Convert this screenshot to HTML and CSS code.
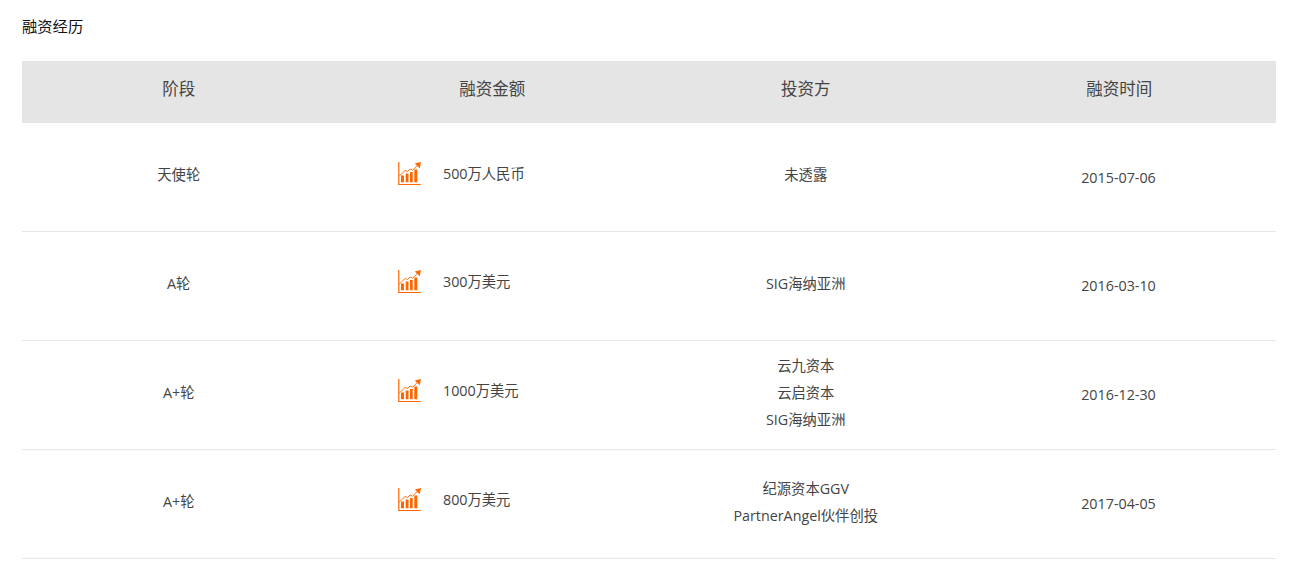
FILE: index.html
```html
<!DOCTYPE html>
<html lang="zh">
<head>
<meta charset="utf-8">
<title>融资经历</title>
<link rel="stylesheet" href="styles.css">
</head>
<body>
<svg class="defs" width="0" height="0" aria-hidden="true">
  <symbol id="chart" viewBox="0 0 24 24">
    <path d="M.8 0V22.500H22.800" fill="none" stroke="#f60" stroke-width="1.200"/>
    <path d="M1.300 14 7 8.500 9.500 9.500 12 7 14.700 8.200 20 2.800" fill="none" stroke="#f60" stroke-width=".9"/>
    <path d="M16.800 1.600 23 .1 21.700 6.200Z" fill="#f60"/>
    <path d="M3 13.500H6V20.300H3ZM7.700 11.500H10.500V20.300H7.700ZM12 10H14.700V20.300H12ZM16.300 7.500H19.300V20.300H16.300Z" fill="#f60"/>
  </symbol>
</svg>
<main class="page">
  <h2 class="title">融资经历</h2>
  <div class="head">
    <div>阶段</div><div>融资金额</div><div>投资方</div><div>融资时间</div>
  </div>
  <div class="row">
    <div class="stage">天使轮</div>
    <div class="amount"><svg class="icon"><use href="#chart"/></svg><span>500万人民币</span></div>
    <div class="investors"><p>未透露</p></div>
    <div class="date">2015-07-06</div>
  </div>
  <div class="row">
    <div class="stage">A轮</div>
    <div class="amount"><svg class="icon"><use href="#chart"/></svg><span>300万美元</span></div>
    <div class="investors"><p>SIG海纳亚洲</p></div>
    <div class="date">2016-03-10</div>
  </div>
  <div class="row">
    <div class="stage">A+轮</div>
    <div class="amount"><svg class="icon"><use href="#chart"/></svg><span>1000万美元</span></div>
    <div class="investors"><p>云九资本</p><p>云启资本</p><p>SIG海纳亚洲</p></div>
    <div class="date">2016-12-30</div>
  </div>
  <div class="row">
    <div class="stage">A+轮</div>
    <div class="amount"><svg class="icon"><use href="#chart"/></svg><span>800万美元</span></div>
    <div class="investors"><p>纪源资本GGV</p><p>PartnerAngel伙伴创投</p></div>
    <div class="date">2017-04-05</div>
  </div>
</main>
</body>
</html>
```
FILE: styles.css
```css
* { box-sizing: border-box; }
html, body { margin: 0; background: #fff; }
body {
  font-family: "Open Sans", "Noto Sans CJK SC", sans-serif;
  font-size: 14.3px;
  color: #444;
  overflow: hidden;
}
.defs { position: absolute; }
.page { padding: 0 20px 0 22px; }
.title {
  margin: 0;
  padding-top: 16px;
  height: 61px;
  font-size: 15.300px;
  line-height: 20px;
  font-weight: 400;
  color: #111;
}
.head, .row {
  display: grid;
  grid-template-columns: repeat(4, 1fr);
  text-align: center;
}
.head {
  height: 62.400px;
  align-items: center;
  background: #e5e5e5;
  font-size: 16.500px;
  line-height: 20px;
  padding-bottom: 6px;
}
.row {
  height: 108.900px;
  border-bottom: 1px solid #e6e6e6;
  align-items: center;
  line-height: 20px;
}
.stage { padding-bottom: 4.100px; }
.amount {
  display: flex;
  align-items: center;
  gap: 21px;
  padding-left: 62.500px;
  padding-bottom: 7.600px;
}
.amount span { line-height: 20px; }
.icon { width: 24px; height: 24px; flex: none; }
.investors { padding-bottom: 5px; }
.investors p { margin: 0; line-height: 27px; }
.date { padding-top: .4px; padding-right: 1.500px; }
```
